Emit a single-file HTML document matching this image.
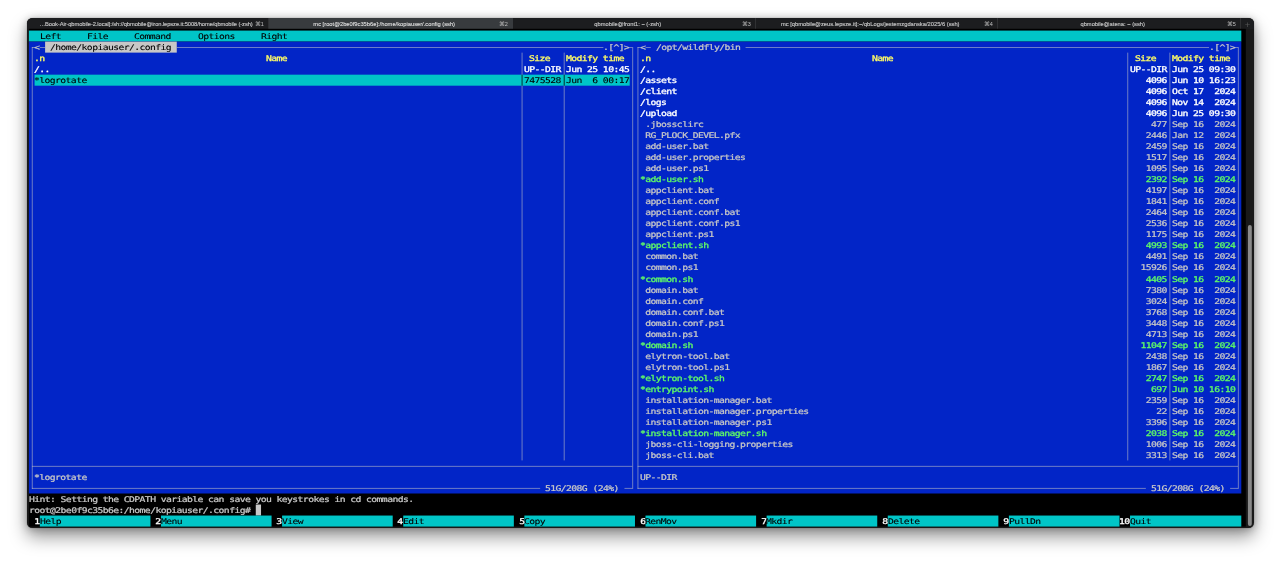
<!DOCTYPE html>
<html lang="en">
<head>
<meta charset="utf-8">
<title>mc [root@2be0f9c35b6e]:/home/kopiauser/.config (ssh)</title>
<style>
html,body{margin:0;padding:0;background:#fff;}
body{width:1280px;height:563px;overflow:hidden;position:relative;}
.win{position:absolute;left:27px;top:18px;width:1227px;height:509.5px;background:#191919;border-radius:5.5px;
  box-shadow:0 0 1px rgba(0,0,0,.55),0 9px 18px rgba(0,0,0,.40),0 1px 9px rgba(0,0,0,.27);overflow:hidden;}
.tabs{position:absolute;left:0;top:0;width:1227px;height:11px;background:#1c1d1f;font-family:"Liberation Sans",sans-serif;font-size:5.75px;color:#c6c6c6;will-change:transform;-webkit-text-stroke:0.14px currentColor;}
.tab{position:absolute;top:0;height:11px;line-height:13.6px;text-align:center;box-sizing:border-box;border-right:1px solid #303133;white-space:nowrap;padding-right:12.6px;}
.tab.on{background:#383b3e;color:#dcdcdc;border-right-color:#383b3e;}
.tab.first{text-align:left;padding-left:12.4px;padding-right:0;letter-spacing:-0.085px;}
.tt{display:inline-block;}
.tk{position:absolute;right:4.2px;top:0;letter-spacing:0;font-size:5.5px;color:#c0c0c0;-webkit-text-stroke:0;}
.plus{position:absolute;left:1214px;top:0;width:13px;height:11px;line-height:13px;text-align:center;font-size:9.5px;color:#555;-webkit-text-stroke:0;}
.term{position:absolute;left:28px;top:28px;width:1226px;height:500px;overflow:hidden;
  font-family:"DejaVu Sans Mono","Liberation Mono",monospace;font-size:7.85px;line-height:11.022px;}
.layer{position:absolute;left:0;top:0;width:100%;height:100%;will-change:transform;filter:blur(0.3px);}
.bg{position:absolute;left:0;top:0;display:block;}
.t{position:absolute;white-space:pre;height:11.022px;transform-origin:0 0;transform:scaleX(1.24000);letter-spacing:-0.4751px;margin-left:-0.25px;-webkit-text-stroke:0.24px currentColor;}
.k{color:#000;-webkit-text-stroke-width:0.1px;} .w{color:#c7c7c7;} .W{color:#fff;} .y{color:#fefb67;} .g{color:#5ff967;}
.b{font-weight:normal;-webkit-text-stroke-width:0.3px;}
.ln{fill:#c7c7c7;fill-opacity:.55;} .lk{fill:#000;fill-opacity:.75;}
</style>
</head>
<body>
<div class="win">
<div class="tabs">
<div class="tab first" style="left:0px;width:242px"><span class="tt">…Book-Air-qbmobile-2.local]:/sh://qbmobile@iron.lepsze.it:5008/home/qbmobile (-zsh)</span><span class="tk">⌘1</span></div>
<div class="tab on" style="left:242px;width:244px"><span class="tt">mc [root@2be0f9c35b6e]:/home/kopiauser/.config (ssh)</span><span class="tk">⌘2</span></div>
<div class="tab" style="left:486px;width:243px"><span class="tt">qbmobile@front1: ~ (-zsh)</span><span class="tk">⌘3</span></div>
<div class="tab" style="left:729px;width:242px"><span class="tt">mc [qbmobile@zeus.lepsze.it]:~/qbLogs/jestemzgdanska/2025/6 (ssh)</span><span class="tk">⌘4</span></div>
<div class="tab" style="left:971px;width:243px"><span class="tt">qbmobile@atena: ~ (ssh)</span><span class="tk">⌘5</span></div>
<div class="plus">+</div>
</div>
</div>
<div class="term">
<svg class="bg" width="1226" height="500" viewBox="0 0 1226 500">
<rect x="0.9" y="0.8" width="1216.9" height="497.77" fill="#000"/>
<rect x="1219.9" y="197.1" width="3.9" height="300.8" rx="1.95" fill="#8a8a8a"/>
<rect x="0.9" y="2.58" width="1212.4" height="11.02" fill="#00c5c7"/>
<rect x="0.9" y="13.6" width="1212.4" height="451.9" fill="#0225c7"/>
<rect class="ln" x="3.76" y="19.01" width="1" height="441.88"/>
<rect class="ln" x="604.17" y="19.01" width="1" height="441.88"/>
<rect class="ln" x="3.93" y="19.01" width="2.63" height="1"/>
<rect class="ln" x="11.83" y="19.01" width="5.27" height="1"/>
<rect x="17.1" y="13.6" width="131.67" height="11.02" fill="#c7c7c7"/>
<rect class="ln" x="148.77" y="19.01" width="426.6" height="1"/>
<rect class="ln" x="601.7" y="19.01" width="2.63" height="1"/>
<rect class="ln" x="3.93" y="437.85" width="600.4" height="1"/>
<rect class="ln" x="3.93" y="459.89" width="508.24" height="1"/>
<rect class="ln" x="596.44" y="459.89" width="7.9" height="1"/>
<rect class="ln" x="493.57" y="24.62" width="1" height="407.81"/>
<rect class="ln" x="535.7" y="24.62" width="1" height="407.81"/>
<rect x="6.57" y="46.67" width="595.13" height="11.02" fill="#00c5c7"/>
<rect class="lk" x="493.57" y="46.67" width="1" height="11.02"/>
<rect class="lk" x="535.7" y="46.67" width="1" height="11.02"/>
<rect class="ln" x="609.43" y="19.01" width="1" height="441.88"/>
<rect class="ln" x="1209.84" y="19.01" width="1" height="441.88"/>
<rect class="ln" x="609.6" y="19.01" width="2.63" height="1"/>
<rect class="ln" x="617.5" y="19.01" width="5.27" height="1"/>
<rect class="ln" x="717.57" y="19.01" width="463.47" height="1"/>
<rect class="ln" x="1207.37" y="19.01" width="2.63" height="1"/>
<rect class="ln" x="609.6" y="437.85" width="600.4" height="1"/>
<rect class="ln" x="609.6" y="459.89" width="508.24" height="1"/>
<rect class="ln" x="1202.11" y="459.89" width="7.9" height="1"/>
<rect class="ln" x="1099.24" y="24.62" width="1" height="407.81"/>
<rect class="ln" x="1141.37" y="24.62" width="1" height="407.81"/>
<rect x="227.77" y="476.53" width="5.26" height="11.02" fill="#c7c7c7"/>
<rect x="11.83" y="487.55" width="110.6" height="11.02" fill="#00c5c7"/>
<rect x="132.97" y="487.55" width="110.6" height="11.02" fill="#00c5c7"/>
<rect x="254.1" y="487.55" width="110.6" height="11.02" fill="#00c5c7"/>
<rect x="375.24" y="487.55" width="110.6" height="11.02" fill="#00c5c7"/>
<rect x="496.37" y="487.55" width="110.6" height="11.02" fill="#00c5c7"/>
<rect x="617.5" y="487.55" width="110.6" height="11.02" fill="#00c5c7"/>
<rect x="738.64" y="487.55" width="110.6" height="11.02" fill="#00c5c7"/>
<rect x="859.77" y="487.55" width="110.6" height="11.02" fill="#00c5c7"/>
<rect x="980.91" y="487.55" width="110.6" height="11.02" fill="#00c5c7"/>
<rect x="1102.04" y="487.55" width="111.26" height="11.02" fill="#00c5c7"/>
</svg>
<div class="layer">
<span class="t k" style="left:11.83px;top:3.03px">Left</span>
<span class="t k" style="left:59.23px;top:3.03px">File</span>
<span class="t k" style="left:106.63px;top:3.03px">Command</span>
<span class="t k" style="left:169.83px;top:3.03px">Options</span>
<span class="t k" style="left:233.03px;top:3.03px">Right</span>
<span class="t w" style="left:6.57px;top:14.05px">&lt;</span>
<span class="t k" style="left:22.37px;top:14.05px">/home/kopiauser/.config</span>
<span class="t w" style="left:575.37px;top:14.05px">.[^]&gt;</span>
<span class="t w" style="left:517.44px;top:454.93px">51G/208G (24%)</span>
<span class="t y b" style="left:6.57px;top:25.07px">.n</span>
<span class="t y b" style="left:238.3px;top:25.07px">Name</span>
<span class="t y b" style="left:501.64px;top:25.07px">Size</span>
<span class="t y b" style="left:538.5px;top:25.07px">Modify time</span>
<span class="t W b" style="left:6.57px;top:36.1px">/..</span>
<span class="t W b" style="left:496.37px;top:36.1px">UP--DIR</span>
<span class="t W b" style="left:538.5px;top:36.1px">Jun 25 10:45</span>
<span class="t k" style="left:6.57px;top:47.12px">*logrotate</span>
<span class="t k" style="left:496.37px;top:47.12px">7475528</span>
<span class="t k" style="left:538.5px;top:47.12px">Jun  6 00:17</span>
<span class="t w" style="left:6.57px;top:443.91px">*logrotate</span>
<span class="t w" style="left:612.24px;top:14.05px">&lt;</span>
<span class="t w" style="left:628.04px;top:14.05px">/opt/wildfly/bin</span>
<span class="t w" style="left:1181.04px;top:14.05px">.[^]&gt;</span>
<span class="t w" style="left:1123.11px;top:454.93px">51G/208G (24%)</span>
<span class="t y b" style="left:612.24px;top:25.07px">.n</span>
<span class="t y b" style="left:843.97px;top:25.07px">Name</span>
<span class="t y b" style="left:1107.31px;top:25.07px">Size</span>
<span class="t y b" style="left:1144.17px;top:25.07px">Modify time</span>
<span class="t W b" style="left:612.24px;top:36.1px">/..</span>
<span class="t W b" style="left:1102.04px;top:36.1px">UP--DIR</span>
<span class="t W b" style="left:1144.17px;top:36.1px">Jun 25 09:30</span>
<span class="t W b" style="left:612.24px;top:47.12px">/assets</span>
<span class="t W b" style="left:1102.04px;top:47.12px">   4096</span>
<span class="t W b" style="left:1144.17px;top:47.12px">Jun 10 16:23</span>
<span class="t W b" style="left:612.24px;top:58.14px">/client</span>
<span class="t W b" style="left:1102.04px;top:58.14px">   4096</span>
<span class="t W b" style="left:1144.17px;top:58.14px">Oct 17  2024</span>
<span class="t W b" style="left:612.24px;top:69.16px">/logs</span>
<span class="t W b" style="left:1102.04px;top:69.16px">   4096</span>
<span class="t W b" style="left:1144.17px;top:69.16px">Nov 14  2024</span>
<span class="t W b" style="left:612.24px;top:80.18px">/upload</span>
<span class="t W b" style="left:1102.04px;top:80.18px">   4096</span>
<span class="t W b" style="left:1144.17px;top:80.18px">Jun 25 09:30</span>
<span class="t w" style="left:612.24px;top:91.21px"> .jbossclirc</span>
<span class="t w" style="left:1102.04px;top:91.21px">    477</span>
<span class="t w" style="left:1144.17px;top:91.21px">Sep 16  2024</span>
<span class="t w" style="left:612.24px;top:102.23px"> RG_PLOCK_DEVEL.pfx</span>
<span class="t w" style="left:1102.04px;top:102.23px">   2446</span>
<span class="t w" style="left:1144.17px;top:102.23px">Jan 12  2024</span>
<span class="t w" style="left:612.24px;top:113.25px"> add-user.bat</span>
<span class="t w" style="left:1102.04px;top:113.25px">   2459</span>
<span class="t w" style="left:1144.17px;top:113.25px">Sep 16  2024</span>
<span class="t w" style="left:612.24px;top:124.27px"> add-user.properties</span>
<span class="t w" style="left:1102.04px;top:124.27px">   1517</span>
<span class="t w" style="left:1144.17px;top:124.27px">Sep 16  2024</span>
<span class="t w" style="left:612.24px;top:135.29px"> add-user.ps1</span>
<span class="t w" style="left:1102.04px;top:135.29px">   1095</span>
<span class="t w" style="left:1144.17px;top:135.29px">Sep 16  2024</span>
<span class="t g b" style="left:612.24px;top:146.32px">*add-user.sh</span>
<span class="t g b" style="left:1102.04px;top:146.32px">   2392</span>
<span class="t g b" style="left:1144.17px;top:146.32px">Sep 16  2024</span>
<span class="t w" style="left:612.24px;top:157.34px"> appclient.bat</span>
<span class="t w" style="left:1102.04px;top:157.34px">   4197</span>
<span class="t w" style="left:1144.17px;top:157.34px">Sep 16  2024</span>
<span class="t w" style="left:612.24px;top:168.36px"> appclient.conf</span>
<span class="t w" style="left:1102.04px;top:168.36px">   1841</span>
<span class="t w" style="left:1144.17px;top:168.36px">Sep 16  2024</span>
<span class="t w" style="left:612.24px;top:179.38px"> appclient.conf.bat</span>
<span class="t w" style="left:1102.04px;top:179.38px">   2464</span>
<span class="t w" style="left:1144.17px;top:179.38px">Sep 16  2024</span>
<span class="t w" style="left:612.24px;top:190.4px"> appclient.conf.ps1</span>
<span class="t w" style="left:1102.04px;top:190.4px">   2536</span>
<span class="t w" style="left:1144.17px;top:190.4px">Sep 16  2024</span>
<span class="t w" style="left:612.24px;top:201.43px"> appclient.ps1</span>
<span class="t w" style="left:1102.04px;top:201.43px">   1175</span>
<span class="t w" style="left:1144.17px;top:201.43px">Sep 16  2024</span>
<span class="t g b" style="left:612.24px;top:212.45px">*appclient.sh</span>
<span class="t g b" style="left:1102.04px;top:212.45px">   4993</span>
<span class="t g b" style="left:1144.17px;top:212.45px">Sep 16  2024</span>
<span class="t w" style="left:612.24px;top:223.47px"> common.bat</span>
<span class="t w" style="left:1102.04px;top:223.47px">   4491</span>
<span class="t w" style="left:1144.17px;top:223.47px">Sep 16  2024</span>
<span class="t w" style="left:612.24px;top:234.49px"> common.ps1</span>
<span class="t w" style="left:1102.04px;top:234.49px">  15926</span>
<span class="t w" style="left:1144.17px;top:234.49px">Sep 16  2024</span>
<span class="t g b" style="left:612.24px;top:245.51px">*common.sh</span>
<span class="t g b" style="left:1102.04px;top:245.51px">   4405</span>
<span class="t g b" style="left:1144.17px;top:245.51px">Sep 16  2024</span>
<span class="t w" style="left:612.24px;top:256.54px"> domain.bat</span>
<span class="t w" style="left:1102.04px;top:256.54px">   7380</span>
<span class="t w" style="left:1144.17px;top:256.54px">Sep 16  2024</span>
<span class="t w" style="left:612.24px;top:267.56px"> domain.conf</span>
<span class="t w" style="left:1102.04px;top:267.56px">   3024</span>
<span class="t w" style="left:1144.17px;top:267.56px">Sep 16  2024</span>
<span class="t w" style="left:612.24px;top:278.58px"> domain.conf.bat</span>
<span class="t w" style="left:1102.04px;top:278.58px">   3768</span>
<span class="t w" style="left:1144.17px;top:278.58px">Sep 16  2024</span>
<span class="t w" style="left:612.24px;top:289.6px"> domain.conf.ps1</span>
<span class="t w" style="left:1102.04px;top:289.6px">   3448</span>
<span class="t w" style="left:1144.17px;top:289.6px">Sep 16  2024</span>
<span class="t w" style="left:612.24px;top:300.62px"> domain.ps1</span>
<span class="t w" style="left:1102.04px;top:300.62px">   4713</span>
<span class="t w" style="left:1144.17px;top:300.62px">Sep 16  2024</span>
<span class="t g b" style="left:612.24px;top:311.65px">*domain.sh</span>
<span class="t g b" style="left:1102.04px;top:311.65px">  11047</span>
<span class="t g b" style="left:1144.17px;top:311.65px">Sep 16  2024</span>
<span class="t w" style="left:612.24px;top:322.67px"> elytron-tool.bat</span>
<span class="t w" style="left:1102.04px;top:322.67px">   2438</span>
<span class="t w" style="left:1144.17px;top:322.67px">Sep 16  2024</span>
<span class="t w" style="left:612.24px;top:333.69px"> elytron-tool.ps1</span>
<span class="t w" style="left:1102.04px;top:333.69px">   1867</span>
<span class="t w" style="left:1144.17px;top:333.69px">Sep 16  2024</span>
<span class="t g b" style="left:612.24px;top:344.71px">*elytron-tool.sh</span>
<span class="t g b" style="left:1102.04px;top:344.71px">   2747</span>
<span class="t g b" style="left:1144.17px;top:344.71px">Sep 16  2024</span>
<span class="t g b" style="left:612.24px;top:355.73px">*entrypoint.sh</span>
<span class="t g b" style="left:1102.04px;top:355.73px">    697</span>
<span class="t g b" style="left:1144.17px;top:355.73px">Jun 10 16:10</span>
<span class="t w" style="left:612.24px;top:366.76px"> installation-manager.bat</span>
<span class="t w" style="left:1102.04px;top:366.76px">   2359</span>
<span class="t w" style="left:1144.17px;top:366.76px">Sep 16  2024</span>
<span class="t w" style="left:612.24px;top:377.78px"> installation-manager.properties</span>
<span class="t w" style="left:1102.04px;top:377.78px">     22</span>
<span class="t w" style="left:1144.17px;top:377.78px">Sep 16  2024</span>
<span class="t w" style="left:612.24px;top:388.8px"> installation-manager.ps1</span>
<span class="t w" style="left:1102.04px;top:388.8px">   3396</span>
<span class="t w" style="left:1144.17px;top:388.8px">Sep 16  2024</span>
<span class="t g b" style="left:612.24px;top:399.82px">*installation-manager.sh</span>
<span class="t g b" style="left:1102.04px;top:399.82px">   2038</span>
<span class="t g b" style="left:1144.17px;top:399.82px">Sep 16  2024</span>
<span class="t w" style="left:612.24px;top:410.84px"> jboss-cli-logging.properties</span>
<span class="t w" style="left:1102.04px;top:410.84px">   1006</span>
<span class="t w" style="left:1144.17px;top:410.84px">Sep 16  2024</span>
<span class="t w" style="left:612.24px;top:421.87px"> jboss-cli.bat</span>
<span class="t w" style="left:1102.04px;top:421.87px">   3313</span>
<span class="t w" style="left:1144.17px;top:421.87px">Sep 16  2024</span>
<span class="t w" style="left:612.24px;top:443.91px">UP--DIR</span>
<span class="t w" style="left:1.3px;top:465.95px">Hint: Setting the CDPATH variable can save you keystrokes in cd commands.</span>
<span class="t w" style="left:1.3px;top:476.98px">root@2be0f9c35b6e:/home/kopiauser/.config#</span>
<span class="t W b" style="left:1.3px;top:488.0px"> 1</span>
<span class="t k" style="left:11.83px;top:488.0px">Help</span>
<span class="t W b" style="left:122.43px;top:488.0px"> 2</span>
<span class="t k" style="left:132.97px;top:488.0px">Menu</span>
<span class="t W b" style="left:243.57px;top:488.0px"> 3</span>
<span class="t k" style="left:254.1px;top:488.0px">View</span>
<span class="t W b" style="left:364.7px;top:488.0px"> 4</span>
<span class="t k" style="left:375.24px;top:488.0px">Edit</span>
<span class="t W b" style="left:485.84px;top:488.0px"> 5</span>
<span class="t k" style="left:496.37px;top:488.0px">Copy</span>
<span class="t W b" style="left:606.97px;top:488.0px"> 6</span>
<span class="t k" style="left:617.5px;top:488.0px">RenMov</span>
<span class="t W b" style="left:728.1px;top:488.0px"> 7</span>
<span class="t k" style="left:738.64px;top:488.0px">Mkdir</span>
<span class="t W b" style="left:849.24px;top:488.0px"> 8</span>
<span class="t k" style="left:859.77px;top:488.0px">Delete</span>
<span class="t W b" style="left:970.37px;top:488.0px"> 9</span>
<span class="t k" style="left:980.91px;top:488.0px">PullDn</span>
<span class="t W b" style="left:1091.51px;top:488.0px">10</span>
<span class="t k" style="left:1102.04px;top:488.0px">Quit</span>
</div>
</div>
</body>
</html>
